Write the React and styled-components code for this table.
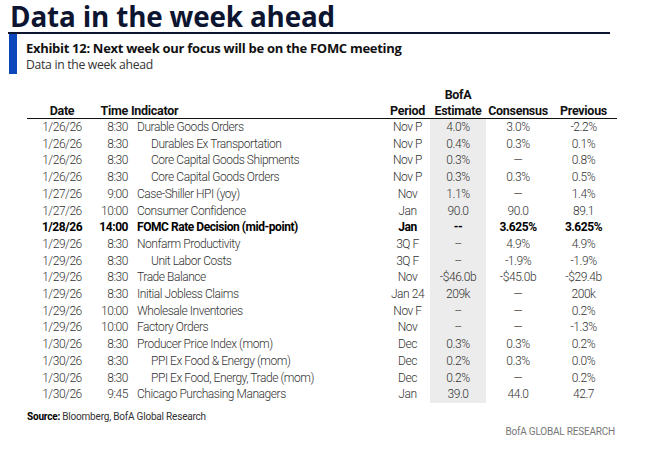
import React from "react";
import styled, { createGlobalStyle } from "styled-components";

const Global = createGlobalStyle`
  html, body { margin: 0; padding: 0; background: #ffffff; }
  body { font-family: Roboto, "Liberation Sans", Arial, sans-serif; }
`;

const Page = styled.div`
  width: 658px;
  height: 457px;
  box-sizing: border-box;
  padding: 0 0 0 8px;
  background: #fff;
  overflow: hidden;
`;

const Title = styled.h1`
  margin: 0;
  width: 600px;
  padding: 0 0 0 2px;
  font-family: "Open Sans", "Liberation Sans", sans-serif;
  font-weight: 700;
  font-size: 27.8px;
  line-height: 32px;
  letter-spacing: -0.15px;
  color: #0d1530;
  border-bottom: 2px solid #0d1530;
`;

const Exhibit = styled.div`
  display: flex;
  gap: 9px;
  margin: 0 0 0 1px;
`;

const Bar = styled.div`
  width: 8px;
  height: 40px;
  background: #0a47bd;
`;

const ExhibitText = styled.div`
  padding-top: 5px;
`;

const ExhibitTitle = styled.div`
  font-family: "Open Sans", "Liberation Sans", sans-serif;
  font-weight: 700;
  font-size: 13px;
  line-height: 18px;
  letter-spacing: -0.3px;
  color: #111;
`;

const ExhibitSub = styled.div`
  font-family: "Open Sans", "Liberation Sans", sans-serif;
  font-size: 12.2px;
  line-height: 15px;
  letter-spacing: -0.3px;
  color: #333;
`;

const Table = styled.div`
  margin: 13px 0 0 19px;
  width: 590px;
  display: grid;
  grid-template-columns: 70px 31px 257px 45px 56px 64px 67px;
`;

const Head = styled.div`
  font-weight: 700;
  color: #111;
  font-size: 12.5px;
  line-height: 15.5px;
  letter-spacing: -0.3px;
  text-align: ${(p) => p.$align || "center"};
  padding-left: ${(p) => p.$pl || 0}px;
  border-bottom: ${(p) => (p.$rule ? "1px solid #111" : "none")};
  white-space: nowrap;
`;

const Cell = styled.div`
  font-size: 12px;
  line-height: 16.7px;
  letter-spacing: -0.45px;
  color: ${(p) => (p.$bold ? "#000" : "#333")};
  font-weight: ${(p) => (p.$bold ? 700 : 300)};
  text-align: ${(p) => p.$align || "center"};
  padding-left: ${(p) => p.$pl || 0}px;
  background: ${(p) => (p.$shade ? "#ececec" : "transparent")};
  white-space: nowrap;
`;

const Source = styled.div`
  margin: 7px 0 0 19px;
  font-size: 10px;
  line-height: 13px;
  letter-spacing: -0.2px;
  color: #333;
  b { color: #000; font-weight: 700; }
`;

const Footer = styled.div`
  width: 607px;
  text-align: right;
  margin-top: 2px;
  font-size: 10px;
  line-height: 13px;
  letter-spacing: -0.2px;
  color: #777;
`;

const rows = [
  ["1/26/26", "8:30", "Durable Goods Orders", 0, "Nov P", "4.0%", "3.0%", "-2.2%"],
  ["1/26/26", "8:30", "Durables Ex Transportation", 1, "Nov P", "0.4%", "0.3%", "0.1%"],
  ["1/26/26", "8:30", "Core Capital Goods Shipments", 1, "Nov P", "0.3%", "—", "0.8%"],
  ["1/26/26", "8:30", "Core Capital Goods Orders", 1, "Nov P", "0.3%", "0.3%", "0.5%"],
  ["1/27/26", "9:00", "Case-Shiller HPI (yoy)", 0, "Nov", "1.1%", "—", "1.4%"],
  ["1/27/26", "10:00", "Consumer Confidence", 0, "Jan", "90.0", "90.0", "89.1"],
  ["1/28/26", "14:00", "FOMC Rate Decision (mid-point)", 0, "Jan", "--", "3.625%", "3.625%", true],
  ["1/29/26", "8:30", "Nonfarm Productivity", 0, "3Q F", "--", "4.9%", "4.9%"],
  ["1/29/26", "8:30", "Unit Labor Costs", 1, "3Q F", "--", "-1.9%", "-1.9%"],
  ["1/29/26", "8:30", "Trade Balance", 0, "Nov", "-$46.0b", "-$45.0b", "-$29.4b"],
  ["1/29/26", "8:30", "Initial Jobless Claims", 0, "Jan 24", "209k", "—", "200k"],
  ["1/29/26", "10:00", "Wholesale Inventories", 0, "Nov F", "--", "—", "0.2%"],
  ["1/29/26", "10:00", "Factory Orders", 0, "Nov", "--", "—", "-1.3%"],
  ["1/30/26", "8:30", "Producer Price Index (mom)", 0, "Dec", "0.3%", "0.3%", "0.2%"],
  ["1/30/26", "8:30", "PPI Ex Food & Energy (mom)", 1, "Dec", "0.2%", "0.3%", "0.0%"],
  ["1/30/26", "8:30", "PPI Ex Food, Energy, Trade (mom)", 1, "Dec", "0.2%", "—", "0.2%"],
  ["1/30/26", "9:45", "Chicago Purchasing Managers", 0, "Jan", "39.0", "44.0", "42.7"],
];

export default function App() {
  return (
    <Page>
      <Global />
      <Title>Data in the week ahead</Title>
      <Exhibit>
        <Bar />
        <ExhibitText>
          <ExhibitTitle>Exhibit 12: Next week our focus will be on the FOMC meeting</ExhibitTitle>
          <ExhibitSub>Data in the week ahead</ExhibitSub>
        </ExhibitText>
      </Exhibit>
      <Table>
        <Head />
        <Head />
        <Head />
        <Head />
        <Head>BofA</Head>
        <Head />
        <Head />
        <Head $rule>Date</Head>
        <Head $rule $align="right">Time</Head>
        <Head $rule $align="left" $pl={3}>Indicator</Head>
        <Head $rule>Period</Head>
        <Head $rule>Estimate</Head>
        <Head $rule>Consensus</Head>
        <Head $rule>Previous</Head>
        {rows.map((r, i) => (
          <React.Fragment key={i}>
            <Cell $bold={r[8]}>{r[0]}</Cell>
            <Cell $bold={r[8]} $align="right">{r[1]}</Cell>
            <Cell $bold={r[8]} $align="left" $pl={r[3] ? 23 : 9}>{r[2]}</Cell>
            <Cell $bold={r[8]}>{r[4]}</Cell>
            <Cell $bold={r[8]} $shade>{r[5]}</Cell>
            <Cell $bold={r[8]}>{r[6]}</Cell>
            <Cell $bold={r[8]}>{r[7]}</Cell>
          </React.Fragment>
        ))}
      </Table>
      <Source>
        <b>Source:</b> Bloomberg, BofA Global Research
      </Source>
      <Footer>BofA GLOBAL RESEARCH</Footer>
    </Page>
  );
}
